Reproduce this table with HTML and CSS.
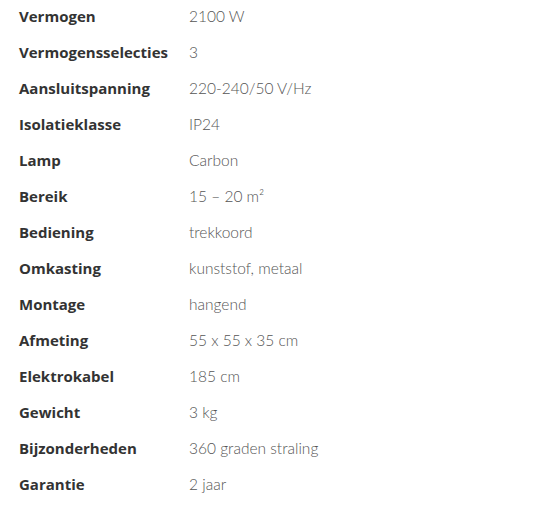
FILE: index.html
```html
<!DOCTYPE html>
<html lang="nl">
<head>
    <meta charset="UTF-8">
    <meta name="viewport" content="width=device-width, initial-scale=1.0">
    <title>Specificaties</title>
    <link rel="stylesheet" href="styles.css">
</head>
<body>

    <table class="specs">
        <tbody>
            <tr><th>Vermogen</th><td>2100 W</td></tr>
            <tr><th>Vermogensselecties</th><td>3</td></tr>
            <tr><th>Aansluitspanning</th><td>220-240/50 V/Hz</td></tr>
            <tr><th>Isolatieklasse</th><td>IP24</td></tr>
            <tr><th>Lamp</th><td>Carbon</td></tr>
            <tr><th>Bereik</th><td>15 &ndash; 20 m&sup2;</td></tr>
            <tr><th>Bediening</th><td>trekkoord</td></tr>
            <tr><th>Omkasting</th><td>kunststof, metaal</td></tr>
            <tr><th>Montage</th><td>hangend</td></tr>
            <tr><th>Afmeting</th><td>55 x 55 x 35 cm</td></tr>
            <tr><th>Elektrokabel</th><td>185 cm</td></tr>
            <tr><th>Gewicht</th><td>3 kg</td></tr>
            <tr><th>Bijzonderheden</th><td>360 graden straling</td></tr>
            <tr><th>Garantie</th><td>2 jaar</td></tr>
        </tbody>
    </table>

</body>
</html>
```

FILE: styles.css
```css
body {
    font-family: Lato, "Open Sans", sans-serif;
    margin: 0;
    padding: 0 0 0 19px;
    background-color: #fff;
}
.specs {
    border-collapse: collapse;
    font-size: 15px;
}
.specs th, .specs td {
    height: 32px;
    padding: 0 0 4px 0;
    text-align: left;
    vertical-align: middle;
}
.specs th {
    width: 170px;
    font-family: "Open Sans", sans-serif;
    font-weight: 700;
    color: #333;
}
.specs td {
    font-size: 15.5px;
    font-weight: 300;
    color: #555;
}
```
